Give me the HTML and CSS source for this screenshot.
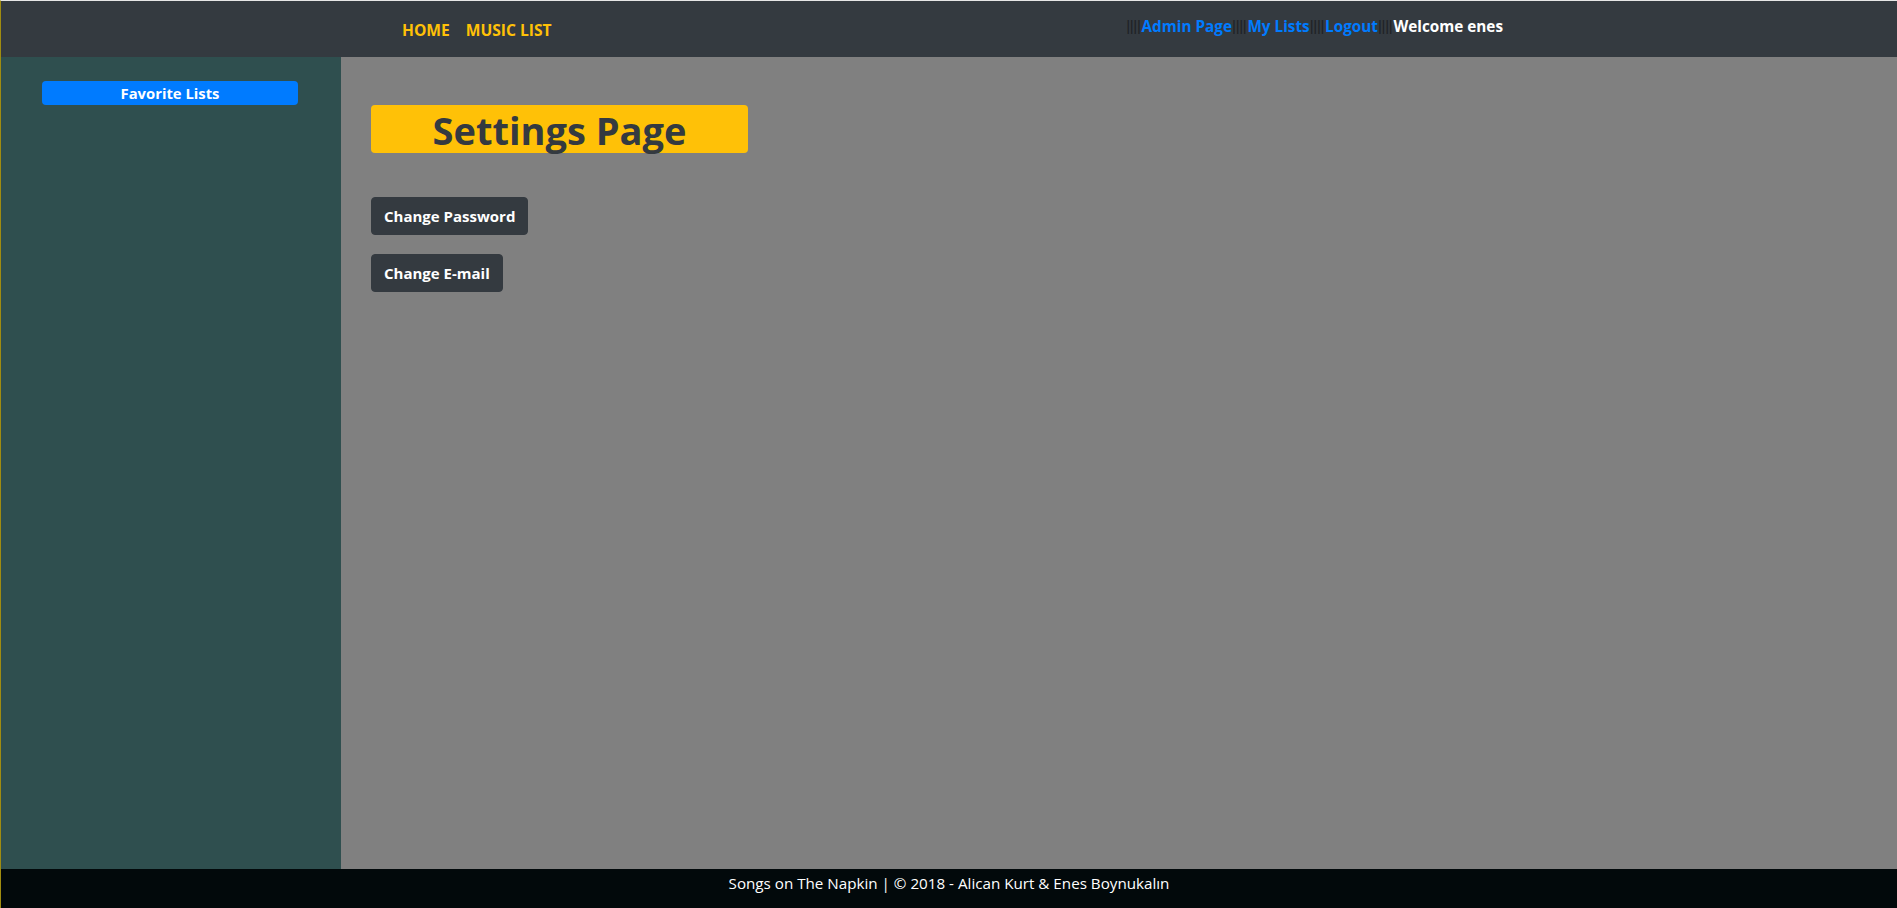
FILE: index.html
```html
<!DOCTYPE html>
<html lang="en">
<head>
<meta charset="utf-8">
<title>Settings Page</title>
<link rel="stylesheet" href="styles.css">
</head>
<body>
<div class="page">
  <header class="topbar">
    <nav class="main-nav">
      <a class="nav-link" href="#">HOME</a>
      <a class="nav-link" href="#">MUSIC LIST</a>
    </nav>
    <nav class="user-nav">
      <span class="sep">||||</span><a class="user-link" href="#">Admin Page</a><span class="sep">||||</span><a class="user-link" href="#">My Lists</a><span class="sep">||||</span><a class="user-link" href="#">Logout</a><span class="sep">||||</span><span class="welcome">Welcome enes</span>
    </nav>
  </header>
  <div class="body-row">
    <aside class="sidebar">
      <button class="fav-btn" type="button">Favorite Lists</button>
    </aside>
    <main class="content">
      <h1 class="title">Settings Page</h1>
      <div class="actions">
        <button class="dark-btn" type="button">Change Password</button>
        <button class="dark-btn" type="button">Change E-mail</button>
      </div>
    </main>
  </div>
  <footer class="footer">Songs on The Napkin | © 2018 - Alican Kurt &amp; Enes Boynukalın</footer>
</div>
</body>
</html>
```
FILE: styles.css
```css
* { box-sizing: border-box; }
html, body { margin: 0; padding: 0; height: 100%; }
body {
  font-family: "Open Sans", "Noto Sans", sans-serif;
  background: #808080;
}
.page {
  height: 100vh;
  display: flex;
  flex-direction: column;
  border-left: 1px solid #a08c10;
  border-top: 1px solid #e6e6e6;
}
.topbar {
  height: 56px;
  flex: none;
  background: #343a40;
  display: flex;
  justify-content: space-between;
  padding: 0 394px 0 401px;
}
.main-nav {
  display: flex;
  gap: 16px;
  padding-top: 19px;
}
.nav-link {
  color: #ffc107;
  text-decoration: none;
  font-weight: 700;
  font-size: 15.6px;
  line-height: 20px;
}
.user-nav {
  display: flex;
  align-items: flex-start;
  padding-top: 15px;
  font-size: 15.3px;
  line-height: 20px;
  font-weight: 700;
}
.sep {
  color: #1e2125;
  font-family: "Liberation Sans", Arial, sans-serif;
  font-weight: 400;
  font-size: 15px;
  letter-spacing: -0.3px;
  margin-right: 1px;
}
.user-link { color: #007bff; text-decoration: none; }
.welcome { color: #ffffff; }
.body-row {
  flex: 1;
  display: flex;
  min-height: 0;
}
.sidebar {
  width: 340px;
  flex: none;
  background: #2f4f4f;
  padding: 24px 0 0 41px;
}
.fav-btn {
  display: block;
  width: 256px;
  height: 24px;
  border: 0;
  border-radius: 4px;
  background: #007bff;
  color: #fff;
  font-family: inherit;
  font-weight: 700;
  font-size: 14.8px;
  padding: 0;
}
.content {
  flex: 1;
  padding: 48px 30px 0 30px;
}
.title {
  margin: 0;
  width: 377px;
  height: 48px;
  background: #ffc107;
  border-radius: 4px;
  color: #343a40;
  font-size: 38px;
  font-weight: 700;
  line-height: 50px;
  text-align: center;
}
.actions {
  display: flex;
  flex-direction: column;
  align-items: flex-start;
  gap: 19px;
  margin-top: 44px;
}
.dark-btn {
  height: 38px;
  padding: 0 12px;
  border: 1px solid #343a40;
  border-radius: 4px;
  background: #343a40;
  color: #fff;
  font-family: inherit;
  font-weight: 700;
  font-size: 15px;
}
.footer {
  height: 39px;
  flex: none;
  background: #02090b;
  color: #fff;
  text-align: center;
  font-size: 15.2px;
  line-height: 28px;
}
```
